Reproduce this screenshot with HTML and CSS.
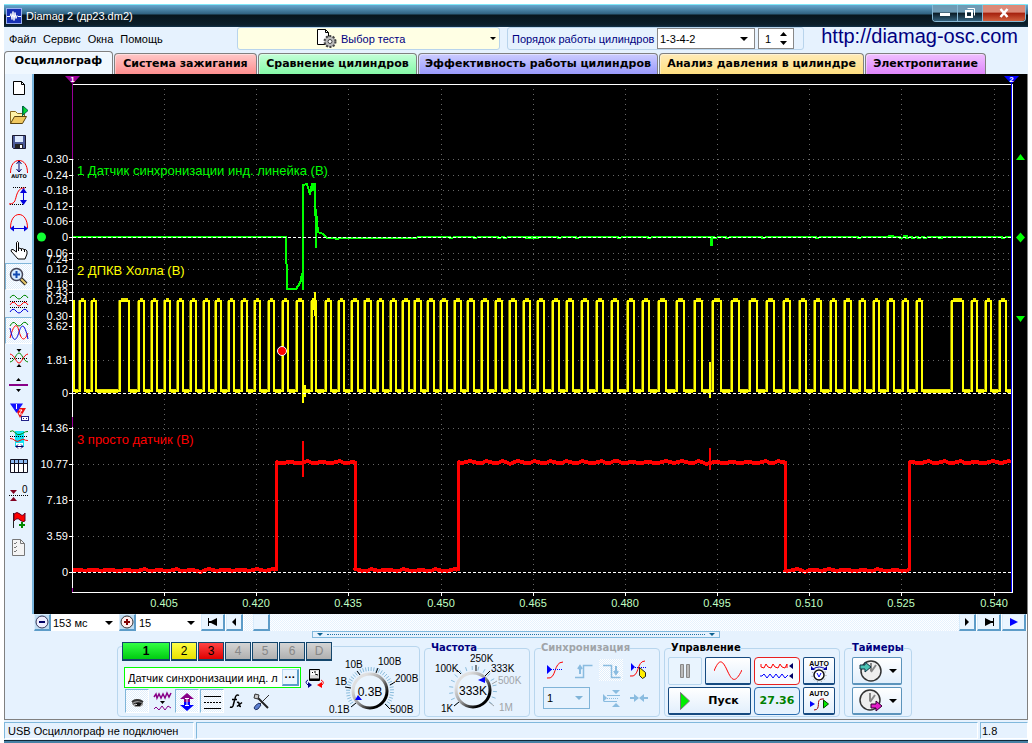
FILE: index.html
```html
<!DOCTYPE html>
<html lang="ru">
<head>
<meta charset="utf-8">
<title>Diamag 2 (др23.dm2)</title>
<link rel="stylesheet" href="styles.css">
</head>
<body>
<div class="window">
  <header class="titlebar">
    <svg class="logo" width="16" height="16" viewBox="0 0 16 16"><rect x=".5" y=".5" width="15" height="15" fill="#1730b4" stroke="#9ab0ee"/><path d="M1 8.500h3l1-3 1 6 1-8 1 9 1-8 1 6 1-3 1 1h3" fill="none" stroke="#fff"/></svg>
    <h1>Diamag 2 (др23.dm2)</h1>
    <div class="winbtns">
      <button class="min" aria-label="Свернуть"><svg width="24" height="16" viewBox="0 0 24 16"><path d="M7 8h10v3H7z" fill="#fff"/></svg></button>
      <button class="max" aria-label="Развернуть"><svg width="24" height="16" viewBox="0 0 24 16"><path d="M9.500 3.500h7v7" fill="none" stroke="#fff"/><path d="M8 6h6v6H8z" fill="none" stroke="#fff" stroke-width="2"/></svg></button>
      <button class="close" aria-label="Закрыть"><svg width="24" height="16" viewBox="0 0 24 16"><path d="M8.500 4l7 8M15.500 4l-7 8" stroke="#fff" stroke-width="2.500"/></svg></button>
    </div>
  </header>

  <div class="topbar">
    <nav class="menu"><a href="#file">Файл</a><a href="#service">Сервис</a><a href="#windows">Окна</a><a href="#help">Помощь</a></nav>
    <button class="test"><svg width="22" height="21" viewBox="0 0 22 21"><path d="M1.500 1.500h8l3 3v12h-11z" fill="#fff" stroke="#000"/><path d="M9.500 1.500v3h3" fill="none" stroke="#000"/><circle cx="14" cy="13.500" r="5.500" fill="#aaa" stroke="#444" stroke-width="2" stroke-dasharray="2 1.500"/><circle cx="14" cy="13.500" r="4" fill="#bbb"/><circle cx="14" cy="13.500" r="2" fill="#fff" stroke="#444"/></svg><span>Выбор теста</span><i class="arrow"></i></button>
    <div class="order">
      <label for="order">Порядок работы цилиндров</label>
      <span class="select firing"><select id="order"><option>1-3-4-2</option></select><i class="arrow"></i></span>
      <span class="spin"><input aria-label="Цилиндр" value="1"><svg width="7" height="13" viewBox="0 0 7 13"><path d="M0 4l3.500-4L7 4zM0 9l3.500 4L7 9z"/></svg></span>
    </div>
    <a class="url" href="http://diamag-osc.com">http://diamag-osc.com</a>
  </div>

  <nav class="tabs">
    <button class="tab t1 on">Осциллограф</button><button class="tab t2">Система зажигания</button><button class="tab t3">Сравнение цилиндров</button><button class="tab t4">Эффективность работы цилиндров</button><button class="tab t5">Анализ давления в цилиндре</button><button class="tab t6">Электропитание</button>
  </nav>

  <main class="workspace">
    <div class="upper">
    <aside class="tools">
      <button aria-label="Новый"><svg viewBox="0 0 26 26"><path d="M7.500 6.500h8l3 3v10h-11z" fill="#fff" stroke="#000"/><path d="M15.500 6.500v3h3" fill="none" stroke="#000"/></svg></button>
      <button aria-label="Открыть"><svg viewBox="0 0 26 26"><path d="M4.500 21.500v-12h5l2 2h7v4" fill="#fff3a8" stroke="#8a6a20"/><path d="M4.500 21.500l4-7h12l-4 7z" fill="#f0c860" stroke="#5a4410"/><path d="M16.500 14V4" stroke="#064"/><path d="M17 4l5 4.500-5 4.500z" fill="#0d3" stroke="#064"/></svg></button>
      <button aria-label="Сохранить"><svg viewBox="0 0 26 26"><path d="M6.500 6.500h13v13h-12l-1-1z" fill="#4a5a98" stroke="#181830"/><path d="M9 7h8v6H9z" fill="#dceaff"/><path d="M9 15h8v4H9z" fill="#222"/><path d="M14 16h2v3h-2z" fill="#fff"/></svg></button>
      <button aria-label="Авто размах"><svg viewBox="0 0 26 26"><path d="M4.500 17C4.500 9 8 4.500 13 4.500S21.500 9 21.500 17" fill="none" stroke="red"/><path d="M13 5v11M10.500 8L13 5l2.500 3M10.500 13l2.500 3 2.500-3" fill="none" stroke="#006"/><text x="13" y="22" class="tiny" text-anchor="middle">AUTO</text></svg></button>
      <button aria-label="Масштаб по вертикали"><svg viewBox="0 0 26 26"><path d="M7 4.500h14M4 21.500h13" stroke="#000" stroke-dasharray="1 1"/><path d="M3 21c7 0 6-5 8-10s4-6 8-6" fill="none" stroke="red"/><path d="M17.500 7v12" stroke="#00d"/><path d="M14 10l3.500-5 3.500 5zM14 17l3.500 5 3.500-5z" fill="#00d"/></svg></button>
      <button aria-label="Масштаб по горизонтали"><svg viewBox="0 0 26 26"><path d="M4.500 18C4.500 10 8 4.500 13 4.500S21.500 10 21.500 18" fill="none" stroke="red"/><path d="M7 18.500h12" stroke="#00d"/><path d="M8 15.500l-4 3 4 3zM18 15.500l4 3-4 3z" fill="#00d"/></svg></button>
      <button aria-label="Рука"><svg viewBox="0 0 26 26"><path d="M10.500 15V5.500q1-2 2 0v6q1.500-1 2.500.500 1.500-1 3 .500 2-.500 3 1.500v3l-2 5h-7l-7-8q0-2 2-1.500z" fill="#fff" stroke="#000"/><path d="M12.500 11v3M15.500 12v2M18.500 13v2" stroke="#000"/></svg></button>
      <button class="pressed" aria-label="Лупа"><svg viewBox="0 0 26 26"><path d="M15 15l5 5" stroke="#222" stroke-width="4"/><path d="M15 15l5 5" stroke="#e8c86a" stroke-width="2"/><circle cx="10.500" cy="10.500" r="6" fill="#d4eaff" stroke="#445" stroke-width="1.500"/><path d="M7 10.500h7M10.500 7v7" stroke="#1048b0" stroke-width="2"/></svg></button>
      <button aria-label="Раздельно"><svg viewBox="0 0 26 26"><path d="M4 10.500h18M4 16.500h18" stroke="#000" stroke-dasharray="1 1"/><g fill="none"><path d="M4 7q3-5 6-1t6 0 6 1" stroke="#080"/><path d="M4 14q3-5 6-1t6 0 6 1" stroke="red"/><path d="M4 21q3-5 6-1t6 0 6 1" stroke="#00d"/></g></svg></button>
      <button class="pressed" aria-label="Вместе"><svg viewBox="0 0 26 26"><g fill="none"><path d="M4 8q3-6 6-2t6 0 6 1" stroke="#080"/><path d="M4 20C8 5 11 5 13 13s5 12 9 2" stroke="red"/><path d="M4 10C7 25 10 24 13 14s6-7 9 7" stroke="#00d"/></g></svg></button>
      <button aria-label="Сжать"><svg viewBox="0 0 26 26"><path d="M4 13.500h18" stroke="#000" stroke-dasharray="1 1"/><path d="M4 17C9 16 10 8 13 8s4 8 9 9" fill="none" stroke="#080"/><path d="M4 9c5 1 6 9 9 9s4-8 9-9" fill="none" stroke="red"/><path d="M10.500 4h5L13 7zM10.500 22h5L13 19z"/></svg></button>
      <button aria-label="Раздвинуть"><svg viewBox="0 0 26 26"><path d="M3 13h19" stroke="#808" stroke-width="2"/><path d="M10 9h5l-2.500-3zM10 17h5l-2.500 3z"/></svg></button>
      <button aria-label="Маркеры"><svg viewBox="0 0 26 26"><path d="M12 9h8l-6 10-4-8z" fill="#e11"/><path d="M13 11h3l-3 4h3" stroke="#fff" fill="none"/><path d="M4 4.500h13L10.500 14z" fill="#11f"/><path d="M10.500 5v5" stroke="#fff"/><rect x="15.500" y="17.500" width="7" height="4" fill="#fff" stroke="#228"/><path d="M17 19.500h1M20 19.500h1" stroke="#228"/></svg></button>
      <button aria-label="Область"><svg viewBox="0 0 26 26"><path d="M9 5h9v16H9z" fill="#10e4f4"/><path d="M4 10.500h18" stroke="#000" stroke-dasharray="1 1"/><path d="M4 5.500q3-2 5 1t5 2 4-2 4-1" fill="none" stroke="#080"/><path d="M4 12.500q3 0 5 2t5 0 4-1 4 1" fill="none" stroke="red"/><rect x="10" y="17" width="7" height="6" fill="#fff"/><path d="M10 20.500h7M12 18.500l-2 2 2 2M15 18.500l2 2-2 2" stroke="#006" fill="none"/></svg></button>
      <button aria-label="Таблица"><svg viewBox="0 0 26 26"><path d="M4.500 6.500h17v13h-17z" fill="#fff" stroke="#112"/><path d="M5 7h16v3H5z" fill="#8fbcf4"/><path d="M4 10.500h18M8.500 7v12M12.500 7v12M17.500 7v12" stroke="#112"/></svg></button>
      <button aria-label="Нуль"><svg viewBox="0 0 26 26"><path d="M3 15.500h19" stroke="#000" stroke-dasharray="1 1"/><path d="M4 10h7l-3.500 4zM4 21h7l-3.500-4z" fill="#800020"/><text x="16" y="13" class="zero">0</text></svg></button>
      <button aria-label="Флаг"><svg viewBox="0 0 26 26"><path d="M7.500 6v15" stroke="#222"/><path d="M8 7q3-3 6 0t5-1v8q-2 2-5-1t-6 1z" fill="red" stroke="#602"/><path d="M16 15v6M13 18h6" stroke="#080" stroke-width="2"/></svg></button>
      <button aria-label="Список"><svg viewBox="0 0 26 26"><path d="M6.500 5.500h8l4 4v12h-12z" fill="#f4f4f4" stroke="#777"/><path d="M14.500 5.500v4h4M8 9l1 1 2-2M8 13l1 1 2-2M8 17l1 1 2-2" fill="none" stroke="#777"/></svg></button>
    </aside>
    <svg class="chart" id="chart" viewBox="34 74 993 540" role="img" aria-label="Осциллограмма"></svg>
    </div>

    <div class="timebar">
      <button class="zoom" aria-label="Уменьшить"><svg viewBox="0 0 16 16"><circle cx="8" cy="8" r="6" fill="#eef" stroke="#335"/><path d="M5 8h6" stroke="#006" stroke-width="2"/></svg></button>
      <span class="select span"><select aria-label="Развёртка"><option>153 мс</option></select><i class="arrow"></i></span>
      <button class="zoom" aria-label="Увеличить"><svg viewBox="0 0 16 16"><circle cx="8" cy="8" r="6" fill="#fee" stroke="#333"/><path d="M5 8h6M8 5v6" stroke="#800000" stroke-width="2"/></svg></button>
      <span class="select zoomval"><select aria-label="Масштаб"><option>15</option></select><i class="arrow"></i></span>
      <button class="jump" aria-label="В начало"><svg viewBox="0 0 12 8"><path d="M1 0h1v3h2l6-3v8L4 5H2v3H1z"/></svg></button>
      <button class="step" aria-label="Назад"><svg viewBox="0 0 12 8"><path d="M8 0v8L4 4z"/></svg></button>
      <div class="track"><button class="thumb" aria-label="Прокрутка"></button></div>
      <button class="step" aria-label="Вперёд"><svg viewBox="0 0 12 8"><path d="M4 0v8l4-4z"/></svg></button>
      <button class="jump" aria-label="В конец"><svg viewBox="0 0 12 8"><path d="M11 0h-1v3H8L2 0v8l6-3h2v3h1z"/></svg></button>
      <button class="jump" aria-label="Пуск просмотра"><svg viewBox="0 0 12 8"><path d="M2 0v8l8-4z" fill="#00f"/></svg></button>
    </div>
    <div class="splitter"><i class="arrow"></i><span></span><i class="arrow"></i></div>

    <div class="panel">
      <section class="group channels">
        <div class="chan"><button class="c1">1</button><button class="c2">2</button><button class="c3">3</button><button disabled>4</button><button disabled>5</button><button disabled>6</button><button disabled>D</button></div>
        <div class="chbody">
          <div class="chleft">
            <div class="namerow">
              <div class="name"><input aria-label="Имя датчика" value="Датчик синхронизации инд. л"><button aria-label="Выбрать датчик">···</button></div>
              <button class="ico" aria-label="Сменить датчик"><svg width="20" height="20" viewBox="0 0 20 20"><path d="M4.500 1.500h10v11h-10z" fill="#ddd" stroke="#000"/><path d="M6 3h7v4H6z" fill="#fff"/><path d="M5 11.500h9" stroke="#000" stroke-width="2"/><path d="M7 5l1-1M9 4h2M10 6l3 1" stroke="#000"/><path d="M3 12q-4 2 0 5" fill="none" stroke="#008"/><path d="M3 14l4 3-4 3z" fill="#008"/><path d="M16 12q4 2 1 5" fill="none" stroke="red"/><path d="M17 14l-5 3 5 3z" fill="red"/></svg></button>
            </div>
            <div class="icons">
              <button class="pressed" aria-label="Видимость"><svg viewBox="0 0 24 23"><path d="M7 11q5-4 11 0v4l-3 2h-5l-3-3z" fill="#999"/><path d="M7 12q5-4 11 0" fill="none" stroke="#333" stroke-width="2"/><path d="M8 14q4-3 9-1l-2 3h-4z" fill="#111"/><path d="M9 15l2-1 1 1" stroke="#ddd" fill="none"/></svg></button>
              <button aria-label="Фильтр"><svg viewBox="0 0 24 23"><path d="M4 7l2-3 1 4 2-4 2 4 2-4 2 4 2-5 2 4 2-4" fill="none" stroke="#808" stroke-width="1.500"/><path d="M10 11h5l-2.500 3z"/><path d="M4 19l2-2 3 3 3-4 3 4 3-4 3 2" fill="none" stroke="#808"/></svg></button>
              <button class="pressed" aria-label="Инверсия"><svg viewBox="0 0 24 23"><path d="M5 9l7-6 7 6h-4v3H9V9z" fill="#808"/><path d="M5 15l7 6 7-6h-4v-3H9v3z" fill="#00f"/><path d="M12 8v8M10 8.500h4M10 15.500h4" stroke="#fff"/></svg></button>
              <button class="pressed" aria-label="Уровни"><svg viewBox="0 0 24 23"><path d="M4 6.500h17M4 18.500h17" stroke="#000"/><path d="M4 12.500h17" stroke="#000" stroke-dasharray="2 1"/></svg></button>
              <button aria-label="Функция"><svg viewBox="0 0 24 23"><path d="M14 5.500q-3-2-4 3L8 16q-1 2-3 1M7 9.500h5M12 12.500q2-1 2 1.500t2 2.500M17 12.500l-5 4" fill="none" stroke="#000" stroke-width="1.500"/></svg></button>
              <button aria-label="Настройки"><svg viewBox="0 0 24 23"><path d="M5 5l13 13" stroke="#222" stroke-width="2"/><path d="M19 5L9 15" stroke="#333"/><path d="M5 4l4 1-1 4-4-1z" fill="#ccc" stroke="#333"/><path d="M9 13l2 2-3 4q-3 2-4-1 1-3 5-5z" fill="#5b7fd0" stroke="#236"/></svg></button>
            </div>
          </div>
          <svg class="knob" id="rangeKnob" width="92" height="66" viewBox="326 654 92 66"></svg>
        </div>
      </section>
      <fieldset class="group freq"><legend>Частота</legend><svg class="knob" id="freqKnob" width="103" height="66" viewBox="426 654 103 66"></svg></fieldset>
      <fieldset class="group sync"><legend>Синхронизация</legend>
        <div class="syncgrid">
          <button aria-label="Синхронизация"><svg viewBox="0 0 24 22"><path d="M4 19c10 2 6-16 16-16" fill="none" stroke="red"/><path d="M8 10.500h12" stroke="#00f" stroke-dasharray="1 1"/><path d="M4 6l5 4.500L4 15z" fill="#00f"/></svg></button>
          <button aria-label="Фронт" disabled><svg viewBox="0 0 24 22"><g fill="none" stroke="#8abce0"><path d="M4 18.500h8.500v-12h9" stroke-width="1.500"/><path d="M9 15V8M7 10l2-3 2 3" stroke-width="2"/></g></svg></button>
          <button aria-label="Спад" class="checked" disabled><svg viewBox="0 0 24 22"><g fill="none" stroke="#8abce0"><path d="M4 6.500h8.500v12h9" stroke-width="1.500"/><path d="M17 7v8M15 12l2 3 2-3" stroke-width="2"/></g></svg></button>
          <button aria-label="Курсор"><svg viewBox="0 0 24 22"><path d="M3 17c10 2 6-15 15-15" fill="none" stroke="red"/><path d="M8 8.500h12" stroke="#00f" stroke-dasharray="1 1"/><path d="M4 4l4 4-4 4z" fill="#00f"/><path d="M12.500 8.500l6 5v4l-3 2-3-3z" fill="#fe0" stroke="#222"/></svg></button>
          <span class="select"><select aria-label="Канал синхронизации" disabled><option>1</option></select><i class="arrow"></i></span>
          <button aria-label="Уровень" disabled><svg viewBox="0 0 24 22"><path d="M8 8.500h13M5 14.500h13" stroke="#8abce0"/><path d="M8 11.500h12" stroke="#8abce0" stroke-dasharray="1 1"/><path d="M4 7l4 4-4 4zM13 3h8l-4 4zM13 20h8l-4-4z" fill="#8abce0"/></svg></button>
          <button aria-label="Центр" disabled><svg viewBox="0 0 24 22"><path d="M3 11h5M16 11h5" stroke="#8abce0" stroke-width="2"/><path d="M7 7l5 4-5 4zM17 7l-5 4 5 4z" fill="#8abce0"/></svg></button>
        </div>
      </fieldset>
      <fieldset class="group control"><legend>Управление</legend>
        <div class="ctl">
          <button class="flat pause" aria-label="Пауза"><svg width="12" height="16" viewBox="0 0 12 16"><path d="M1.500 1.500h3v13h-3zM7.500 1.500h3v13h-3z" fill="#bbb" stroke="#888"/></svg></button>
          <button class="dark wave" aria-label="Одиночный"><svg width="28" height="20" viewBox="0 0 28 20"><path d="M0 10C5-2 8-2 13 9s8 14 15 0" fill="none" stroke="red"/></svg></button>
          <button class="redb" aria-label="Непрерывный"><svg width="34" height="20" viewBox="0 0 34 20"><path d="M1 3v3l3 1 2-4 2 3 3 1 2-4 2 3 3 1 2-4 2 3 3 1 2-4v4" fill="none" stroke="red"/><path d="M0 15h2l2-2 3 4 3-4 3 4 3-4 3 4 3-4 3 4 3-3" fill="none" stroke="#00f"/><path d="M33 2v6l-4-3zM33 12v6l-4-3z" fill="#006"/></svg></button>
          <button class="dark" aria-label="Автодиапазон"><svg width="26" height="25" viewBox="0 0 26 25"><text class="auto" x="13" y="8" text-anchor="middle">AUTO</text><path d="M7 11q6-4 13 0" fill="none" stroke="#00a"/><path d="M5 8v4h4zM21 8v4h-4z" fill="#00a"/><circle cx="13" cy="17" r="5" fill="#fff" stroke="#111" stroke-width="1.500"/><circle cx="13" cy="17" r="7" fill="none" stroke="#888" stroke-dasharray="1 3"/><path d="M11 15l2 4 2-4" fill="none" stroke="#00f"/></svg></button>
          <button class="dark start"><svg width="10" height="18" viewBox="0 0 10 18"><path d="M.5 .5L9.500 9l-9 8.500z" fill="#0e0" stroke="#777"/></svg><span>Пуск</span></button>
          <output class="value">27.36</output>
          <button class="dark" aria-label="Автопуск"><svg width="26" height="25" viewBox="0 0 26 25"><text class="auto" x="13" y="8" text-anchor="middle">AUTO</text><path d="M8 22c8 0 1-11 8-11h2" fill="none" stroke="#900"/><path d="M4 13v6l5-3z" fill="#00f"/><path d="M17.500 12v8l5-4z" fill="#0e0" stroke="#040"/></svg></button>
        </div>
      </fieldset>
      <fieldset class="group timers"><legend>Таймеры</legend>
        <button aria-label="Таймер пуска"><svg width="26" height="24" viewBox="0 0 26 24"><circle cx="14" cy="12" r="10" fill="#eee" stroke="#333" stroke-width="1.500"/><path d="M14 12V4M14 13l5-7" stroke="#888" stroke-width="2"/><path d="M3 6h5V3l6 5-6 5v-3H3z" fill="#4bc4b4" stroke="#134"/></svg><i class="arrow"></i></button>
        <button aria-label="Таймер остановки"><svg width="26" height="24" viewBox="0 0 26 24"><circle cx="13" cy="11" r="10" fill="#eee" stroke="#333" stroke-width="1.500"/><path d="M13 12V4M13 13l5-7" stroke="#888" stroke-width="2"/><path d="M14 15h5v-3l6 5-6 5v-3h-5z" fill="#e31bc8" stroke="#303"/></svg><i class="arrow"></i></button>
      </fieldset>
    </div>
  </main>
  <footer class="status"><span class="usb">USB Осциллограф не подключен</span><span class="mid"></span><span class="ver">1.8</span></footer>
</div>
<script src="app.js"></script>
</body>
</html>
```
FILE: styles.css
```css
* { box-sizing: border-box; }
body { margin: 0; background: #fff; font: 11px/14px "Liberation Sans", sans-serif; color: #000; }
button, input, select { font: inherit; color: inherit; margin: 0; padding: 0; border: 0; background: none; border-radius: 0; }
button { display: flex; align-items: center; justify-content: center; }
a { color: inherit; text-decoration: none; }
svg { display: block; }
.arrow { width: 0; height: 0; border: solid transparent; border-width: 4px 4px 0; border-top-color: #000; flex: none; }
.window { display: flex; flex-direction: column; min-height: 100vh; padding: 4px 4px 0; }

.titlebar { display: flex; align-items: center; height: 23px; flex: none; padding-left: 2px; gap: 4px; border-top: 1px solid #7fe8f8; background: linear-gradient(#66a7cf 0, #2f617f 9px, #07151c 10px, #0c1f2b 20px, #12324b); }
.titlebar h1 { margin: 0; flex: 1; font-size: 11px; font-weight: normal; color: #fff; }
.winbtns { display: flex; align-self: flex-start; margin-right: 2px; border: 1px solid #87b8d4; border-top: 0; border-radius: 0 0 4px 4px; overflow: hidden; }
.winbtns button { height: 16px; width: 25px; border-right: 1px solid #87b8d4; background: linear-gradient(#6f9bb5 45%, #0a1a24 50%, #35637f); }
.winbtns .close { width: 42px; border: 0; background: linear-gradient(#dc8a78 45%, #a41f0c 50%, #d0603e); }

.topbar { display: flex; align-items: flex-start; height: 25px; flex: none; background: #e6f2fe; }
.menu { display: flex; gap: 7px; width: 233px; padding: 5px 0 0 5px; }
.test { width: 263px; height: 23px; border: 1px solid #b8d4ec; border-radius: 3px; background: #ffffe4; color: #000080; padding: 0 3px 0 78px; gap: 3px; justify-content: flex-start; }
.test .arrow { margin-left: auto; border-width: 3px 3px 0; }
.order { display: flex; align-items: center; width: 297px; height: 23px; margin-left: 7px; padding-left: 4px; border: 1px solid #b8d4ec; border-radius: 3px; color: #000080; }
.order label { flex: 1; white-space: nowrap; }
.select { display: flex; position: relative; align-items: center; background: #fff; color: #000; }
.select select { appearance: none; width: 100%; height: 100%; outline: 0; opacity: 1; }
.select .arrow { position: absolute; right: 6px; pointer-events: none; }
.firing { width: 98px; height: 21px; border: 1px solid #888; padding-left: 2px; }
.spin { display: flex; align-items: center; width: 36px; height: 21px; margin: 0 9px 0 3px; padding: 0 6px; border: 1px solid #888; background: #fff; color: #000; }
.spin input { flex: 1; min-width: 0; }
.spin svg { flex: none; }
.url { margin-left: auto; padding-right: 10px; font-size: 20px; line-height: 18px; color: #000080; white-space: nowrap; }

.tabs { display: flex; align-items: flex-end; gap: 1px; height: 22px; flex: none; background: #e6f2fe; }
.tab { height: 21px; border: 1px solid #808080; border-bottom: 0; border-radius: 4px 4px 0 0; font: bold 11px/14px "DejaVu Sans", sans-serif; white-space: nowrap; box-shadow: inset 1px 1px 0 rgba(255,255,255,.4); }
.tab.on { height: 23px; background: #f0f8ff; padding-bottom: 4px; }
.t1 { width: 109px; }
.t2 { width: 143px; background: linear-gradient(#ffc8c8, #ff8f8f); }
.t3 { width: 159px; background: linear-gradient(#c4ffd8, #86f9a8); }
.t4 { width: 240px; background: linear-gradient(#ccccff, #9a9afc); }
.t5 { width: 205px; background: linear-gradient(#ffebb8, #ffdf80); }
.t6 { width: 121px; background: linear-gradient(#f0c0ff, #df86fc); }

.workspace { display: flex; flex-direction: column; flex: 1; border: 1px solid #808080; border-top: 0; background: #e6f2fe; }
.upper { display: flex; flex: 1; min-height: 0; }
.tools { width: 29px; flex: none; padding-bottom: 54px; border-right: 2px solid #78b4dc; }
.tools button { width: 27px; height: 27px; }
.tools svg { width: 26px; height: 26px; flex: none; }
.pressed { border: 1px solid #7fb6da; border-right-color: #fff; border-bottom-color: #fff; background: repeating-conic-gradient(#fff 0 25%, #e0eefb 0 50%) 0 0 / 2px 2px; }
.tools .pressed { border: 1px solid #7fb6da; border-right-color: #fff; border-bottom-color: #fff; }
.tiny { font: bold 5px "DejaVu Sans", sans-serif; }
.zero { font: 10px "Liberation Sans", sans-serif; }
.chart { flex: 1; min-width: 0; width: 100%; height: 540px; background: #000; font: 11px "Liberation Sans", sans-serif; }
.chart .name-label { font-size: 13px; }
.grid { stroke: #666; stroke-dasharray: 1 4; shape-rendering: crispEdges; }
.axis { stroke: #fff; shape-rendering: crispEdges; }
.base { stroke: #fff; stroke-dasharray: 3 2; shape-rendering: crispEdges; }
.trace { fill: none; shape-rendering: crispEdges; stroke-linejoin: round; }

.timebar { display: flex; height: 17px; flex: none; margin-left: 29px; background: #fff; }
.timebar button { border: 1px solid #d8ecfc; border-right: 2px solid #5d9cc8; border-bottom: 2px solid #5d9cc8; background: #eaf5ff; }
.timebar .zoom { width: 17px; background: #bfdcf2; }
.timebar .zoom svg { width: 16px; height: 16px; flex: none; }
.span { width: 68px; padding-left: 2px; }
.zoomval { width: 65px; padding-left: 3px; }
.timebar .jump, .timebar .step { margin-right: 1px; }
.jump { width: 24px; }
.step { width: 17px; }
.jump svg, .step svg { width: 12px; height: 8px; flex: none; }
.track { flex: 1; background: repeating-conic-gradient(#fff 0 25%, #e6f2fe 0 50%) 0 0 / 2px 2px; padding-left: 9px; }
.track .thumb { width: 17px; height: 17px; }
.splitter { display: flex; align-items: center; justify-content: space-between; gap: 4px; width: 408px; height: 7px; flex: none; margin-left: 307px; padding: 0 4px; border: 1px solid #80b8dc; }
.splitter span { flex: 1; border-top: 1px dotted #2070a0; }
.splitter .arrow { border-width: 3px 3px 0; border-top-color: #0a6090; }

.panel { display: flex; align-items: stretch; gap: 4px; flex: none; height: 81px; padding: 3px 0 2px 112px; }
.group { margin: 0; padding: 0; border: 1px solid #b8d6ee; border-radius: 4px; min-width: 0; }
.group legend { margin-left: 6px; padding: 0; font: bold 10px/14px "DejaVu Sans", sans-serif; }
.channels { width: 303px; margin-top: 5px; padding-left: 4px; }
.chan { display: flex; gap: 1px; margin-top: -5px; width: 211px; background: #e6f2fe; }
.chan button { width: 26px; height: 19px; flex: none; border: 1px solid #14466c; border-bottom-width: 2px; background: linear-gradient(#d4d4d4, #b0b0b0); color: #888; font-size: 12px; }
.chan .c1 { width: 48px; background: linear-gradient(#3f4, #0c1); color: #000; font-weight: bold; }
.chan .c2 { background: linear-gradient(#ff4, #e8e000); color: #000; }
.chan .c3 { background: linear-gradient(#f44, #e00000); color: #000; }
.chbody { display: flex; height: 57px; }
.chleft { width: 204px; flex: none; padding-top: 6px; }
.namerow { display: flex; gap: 4px; padding-left: 2px; }
.name { display: flex; width: 177px; height: 21px; border: 1px solid #0f0; background: #fff; padding: 1px; }
.name input { flex: 1; min-width: 0; padding-left: 2px; }
.name button { width: 17px; border: 1px solid #b8d8f0; border-right: 2px solid #5d9cc8; border-bottom: 2px solid #5d9cc8; background: #eaf5ff; font-weight: bold; }
.icons { display: flex; gap: 1px; padding: 1px 0 0 3px; }
.icons button { width: 24px; height: 24px; }
.icons svg { width: 24px; height: 23px; flex: none; }
.knob { flex: none; overflow: visible; margin-top: -7px; font: 10px "Liberation Sans", sans-serif; }
.freq { width: 106px; color: #000080; }
.freq .knob { margin-top: -2px; }
.knob .val { font-size: 12px; }
.freq legend, .timers legend { color: #000080; }
.sync { width: 126px; }
.sync legend { color: #a0a4a8; }
.syncgrid { display: grid; grid-template-columns: 24px 24px 24px 24px; gap: 6px 4px; padding: 4px 0 0 8px; }
.syncgrid svg { width: 24px; height: 22px; flex: none; }
.syncgrid button { height: 22px; }
.syncgrid .select { grid-column: span 2; width: 47px; height: 22px; border: 1px solid #80b4d8; background: #e6f2fe; padding-left: 3px; }
.syncgrid .arrow { border-top-color: #80b4d8; }
.checked { background: repeating-conic-gradient(#fff 0 25%, #e0eefb 0 50%) 0 0 / 2px 2px; }
.control { width: 176px; }
.ctl { display: grid; grid-template-columns: 34px 46px 46px 32px; grid-auto-rows: 28px; gap: 2px 3px; padding: 2px 0 0 3px; }
.ctl button, .timers button { border-radius: 2px; background: linear-gradient(#fff, #e2effc); }
.ctl .flat { border: 1px solid #b8d6ee; background: #e9f4fe; }
.ctl .dark { border: 1px solid #164a80; border-bottom-width: 2px; }
.ctl .redb { border: 1px solid #e82020; border-radius: 4px; background: #f8fbff; }
.ctl .start { grid-column: span 2; gap: 18px; font: bold 11px/14px "DejaVu Sans", sans-serif; }
.auto { font: bold 7px "Liberation Sans", sans-serif; }
.value { display: flex; align-items: center; justify-content: center; border: 1px solid #2a6cb0; border-radius: 4px; color: #008000; font: bold 11px/14px "DejaVu Sans", sans-serif; }
.timers { width: 68px; padding-left: 7px; }
.timers legend { margin-left: 0; }
.timers button { width: 50px; height: 28px; margin-top: 2px; gap: 6px; border: 1px solid #5c94bc; border-bottom-width: 2px; }

.status { display: flex; gap: 2px; height: 24px; flex: none; padding-top: 2px; background: #e6f2fe; border-bottom: 3px solid #4680a4; box-shadow: inset 0 -1px #102838; }
.status span { height: 17px; border: 1px solid #80b8dc; border-right-color: #fff; border-bottom-color: #fff; padding-left: 3px; line-height: 16px; white-space: nowrap; }
.status .usb { width: 190px; }
.status .mid { flex: 1; }
.status .ver { width: 48px; padding-left: 1px; }
```
FILE: app.js
```javascript
const NS = 'http://www.w3.org/2000/svg';
function add(root, tag, attrs, text) {
  const node = document.createElementNS(NS, tag);
  for (const key in attrs) node.setAttribute(key, attrs[key]);
  if (text !== undefined) node.textContent = text;
  root.appendChild(node);
  return node;
}

const chart = document.getElementById('chart');
const LEFT = 73, RIGHT = 1011;

// time grid
[164, 256, 348, 441, 533, 625, 717, 809, 901, 994].forEach((x, i) => {
  add(chart, 'path', { class: 'grid', d: `M${x + .5} 89V592` });
  add(chart, 'path', { class: 'axis', d: `M${x + .5} 593v3` });
  add(chart, 'text', { x, y: 607, fill: '#c0ffc0', 'text-anchor': 'middle' }, (0.405 + i * 0.015).toFixed(3));
});

// value grid: [y, label]
const levels = [
  [159, '-0.30'], [175, '-0.24'], [190, '-0.18'], [206, '-0.12'], [221, '-0.06'], [237, '0'],
  [253, '0.06'], [259, '7.24'], [269, '0.12'], [284, '0.18'], [292, '5.43'], [300, '0.24'],
  [316, '0.30'], [326, '3.62'], [360, '1.81'], [393, '0'],
  [428, '14.36'], [464, '10.77'], [500, '7.18'], [536, '3.59'], [572, '0']
];
for (const [y, label] of levels) {
  if (label !== '0') add(chart, 'path', { class: 'grid', d: `M${LEFT} ${y + .5}H${RIGHT}` });
  add(chart, 'path', { class: 'axis', d: `M69 ${y + .5}h4` });
  add(chart, 'text', { x: 68, y: y + 4, fill: '#fff', 'text-anchor': 'end' }, label);
}

let seed = 7;
function rnd() { seed = (seed * 16807) % 2147483647; return seed / 2147483647; }

// channel 2: pulse intervals [rise, fall]
const pulses = [[79, 85], [91, 96], [119, 129]];
for (let i = 0; i < 5; i++) pulses.push([138 + i * 13, 144 + i * 13]);
pulses.push([203, 209], [215, 221], [228, 234], [241, 247], [254, 260], [268, 274], [282, 288], [296, 303],
  [311, 316], [325, 331], [338, 344], [351, 358], [364, 371], [377, 383], [390, 396], [402, 409], [414, 421], [427, 434]);
let at = 427;
for (let i = 1; i < 15; i++) {
  at += 13 + i * 0.17;
  pulses.push([Math.round(at), Math.round(at) + 7]);
}
pulses.push([642, 649], [658, 666], [676, 684], [694, 702], [712, 721], [731, 739], [749, 757], [766, 774],
  [783, 790], [799, 806], [814, 821], [830, 836], [844, 851], [859, 865], [873, 879], [887, 894], [902, 908],
  [916, 922], [951, 963], [971, 977], [985, 991], [999, 1006]);
let wave = 'M74 300V391', bars = '', slopes = '', previous = 74;
for (const [rise, fall] of pulses) {
  wave += `H${rise + 1}V301H${fall}V391`;
  slopes += `M${rise} 391L${rise + 1} 301`;
  bars += `M${rise + 2} 300H${fall - 1}`;
  if (rise - previous > 4) bars += `M${previous + 1} 391H${rise - 1}`;
  previous = fall;
}
wave += 'H1011';
bars += 'M1007 391h4';
add(chart, 'path', { class: 'trace', d: slopes, stroke: '#8a8400', 'stroke-width': 3 });
add(chart, 'path', { class: 'trace', d: bars, stroke: '#e6e000', 'stroke-width': 4 });
add(chart, 'path', { class: 'trace', d: wave, stroke: '#ff0', 'stroke-width': 2 });
add(chart, 'path', { class: 'trace', d: 'M303 383v20M305 385v12M315 292v24M313 298v12M710 362v36', stroke: '#ff0', 'stroke-width': 2 });

// channel 1
let green = 'M73 237H286L287 289H296L300 283 302 274 303 289V185L307 184 310 194 312 184H315L316 247V210L318 232 323 234 327 238';
for (let x = 330; x < RIGHT; x += 6) green += `L${x} ${x < 420 ? 238 : 237}v${rnd() > .85 ? 1 : 0}`;
add(chart, 'path', { class: 'trace', d: green + 'H1011', stroke: '#0f0', 'stroke-width': 2 });
add(chart, 'path', { class: 'trace', d: 'M711 237v9M312 185v6M525 237h14M888 236h6M903 236h5M938 237h5', stroke: '#0f0', 'stroke-width': 3 });

// channel 3
function noisy(from, to, y) {
  let d = '';
  for (let x = from; x < to; x += 4) d += `L${x} ${y + Math.round(Math.sin(x / 2.6) + rnd() * .6)}`;
  return d + `L${to} ${y}`;
}
const highs = [[276, 355], [458, 785], [909, 1011]];
let ripple = 'M73 570', edges = '', low = 73;
for (const [rise, fall] of highs) {
  ripple += noisy(low, rise, 570) + `M${rise} 462` + noisy(rise, fall, 462);
  edges += `M${rise} 571V461`;
  if (fall < RIGHT) { edges += `M${fall} 461V571`; ripple += `M${fall} 570`; }
  low = fall;
}
add(chart, 'path', { class: 'trace', d: ripple, stroke: '#f00', 'stroke-width': 4 });
add(chart, 'path', { class: 'trace', d: edges, stroke: '#f00', 'stroke-width': 3 });
add(chart, 'path', { class: 'trace', d: 'M303 441v36M710 448v22', stroke: '#f00', 'stroke-width': 2 });

for (const y of [237, 393, 572]) add(chart, 'path', { class: 'base', d: `M${LEFT} ${y + .5}H${RIGHT}` });

// frame and markers
add(chart, 'path', { class: 'axis', d: 'M72 84.500H1012M72 592.500H1012M72.500 159V593M1012.500 84V593' });
add(chart, 'path', { d: 'M72.500 84V159M72.500 417v10M72.500 588v4', stroke: '#909', 'shape-rendering': 'crispEdges' });
add(chart, 'path', { d: 'M1011.500 84V592', stroke: '#00f', 'shape-rendering': 'crispEdges' });
add(chart, 'path', { d: 'M65 76H80L72.500 84z', fill: '#909' });
add(chart, 'path', { d: 'M1004 76H1019L1011.500 84z', fill: '#00f' });
add(chart, 'text', { x: 72.5, y: 82, fill: '#fff', 'text-anchor': 'middle', 'font-size': 8, 'font-weight': 'bold' }, '1');
add(chart, 'text', { x: 1011.5, y: 82, fill: '#fff', 'text-anchor': 'middle', 'font-size': 8, 'font-weight': 'bold' }, '2');
add(chart, 'circle', { cx: 41.5, cy: 237, r: 4.5, fill: '#1f3' });
add(chart, 'path', { d: 'M1016 160l4.500-6 4.500 6zM1016 237.500l4.500-5 4.500 5-4.500 5zM1016 316h9l-4.500 6z', fill: '#0f0' });
add(chart, 'circle', { cx: 282, cy: 351, r: 4.5, fill: '#f00', stroke: '#fff' });
add(chart, 'text', { class: 'name-label', x: 77, y: 175, fill: '#0f0' }, '1 Датчик синхронизации инд. линейка (В)');
add(chart, 'text', { class: 'name-label', x: 77, y: 275, fill: '#ff0' }, '2 ДПКВ Холла (В)');
add(chart, 'text', { class: 'name-label', x: 77, y: 444, fill: '#f00' }, '3 просто датчик (В)');

// rotary knobs
function knob(id, cx, cy, value, labels, pointer, from, to) {
  const root = document.getElementById(id);
  const grad = add(add(root, 'defs', {}), 'linearGradient', { id: id + 'g', x1: 0, y1: 0, x2: 1, y2: 1 });
  add(grad, 'stop', { offset: '.2', 'stop-color': '#e0e0e0' });
  add(grad, 'stop', { offset: '.5', 'stop-color': '#999' });
  add(grad, 'stop', { offset: '.8', 'stop-color': '#000' });
  const step = id === 'freqKnob' ? 16 : 7;
  for (let a = from; a <= to; a += step) {
    const r = a * Math.PI / 180, s = Math.sin(r), c = -Math.cos(r);
    add(root, 'path', { d: `M${cx + s * 20} ${cy + c * 20}L${cx + s * 24} ${cy + c * 24}`, stroke: '#8abcdc' });
  }
  add(root, 'circle', { cx, cy, r: 17, fill: '#e9f4fe', stroke: `url(#${id}g)`, 'stroke-width': 3 });
  add(root, 'path', { d: pointer, fill: '#00f' });
  add(root, 'text', { class: 'val', x: cx, y: cy + 5, 'text-anchor': 'middle' }, value);
  for (const [x, y, text, mark, muted] of labels) {
    add(root, 'path', { d: mark, stroke: muted ? '#a0a4a8' : '#000' });
    add(root, 'text', { x, y, fill: muted ? '#a0a4a8' : '#000' }, text);
  }
}
knob('rangeKnob', 370, 691, '0.3В', [
  [329, 713, '0.1В', 'M351 707l5-4'], [335, 685, '1В', 'M345 687l6 1'], [345, 668, '10В', 'M357 671l3 4'],
  [378, 665, '100В', 'M378 668l-2 5'], [395, 682, '200В', 'M395 682l-5 3'], [390, 713, '500В', 'M390 709l-5-5']
], 'M355 700l3-5 4 5z', -130, 130);
knob('freqKnob', 474, 691, '333K', [
  [442, 713, '1K', 'M455 707l5-4'], [436, 673, '100K', 'M458 671l4 4'], [471, 663, '250K', 'M477 666v6'],
  [492, 673, '333K', 'M491 672l-5 5'], [499, 685, '500K', 'M498 682l-5 3', true], [500, 712, '1M', 'M495 707l-5-4', true]
], 'M479 681l7-3v6z', -130, 130);
```
